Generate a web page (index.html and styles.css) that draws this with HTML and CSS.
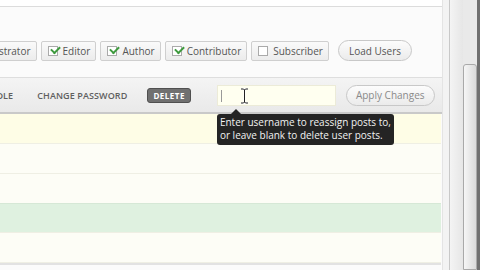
FILE: index.html
```html
<!DOCTYPE html>
<html lang="en">
<head>
  <meta charset="UTF-8">
  <title>Users</title>
  <link rel="stylesheet" href="styles.css">
</head>
<body>
  <div class="page">
    <div class="main">
      <div class="topbox"></div>

      <div class="roles">
        <label class="role"><span class="box"></span>Administrator</label>
        <label class="role"><span class="box on"></span>Editor</label>
        <label class="role"><span class="box on"></span>Author</label>
        <label class="role"><span class="box on"></span>Contributor</label>
        <label class="role"><span class="box"></span>Subscriber</label>
        <button class="pill load">Load Users</button>
      </div>

      <div class="toolbar">
        <span class="action first">CHANGE ROLE</span>
        <span class="action">CHANGE PASSWORD</span>
        <span class="badge">DELETE</span>
        <div class="reassign">
          <div class="field">
            <span class="caret"></span>
            <svg class="ibeam" width="9" height="16" viewBox="0 0 9 16">
              <path d="M1 1h2.5l1 1 1-1H8M4.5 2v12M1 15h2.5l1-1 1 1H8" fill="none" stroke="#fff" stroke-width="2.2"/>
              <path d="M1 1h2.5l1 1 1-1H8M4.5 2v12M1 15h2.5l1-1 1 1H8" fill="none" stroke="#222" stroke-width="1"/>
            </svg>
          </div>
          <div class="tip">Enter username to reassign posts to,<br>or leave blank to delete user posts.</div>
        </div>
        <button class="pill apply">Apply Changes</button>
      </div>

      <div class="rows">
        <div class="row sel"></div>
        <div class="row"></div>
        <div class="row"></div>
        <div class="row green"></div>
        <div class="row"></div>
      </div>
    </div>

    <div class="gutter"></div>
    <div class="scrollbar">
      <div class="track"></div>
      <div class="thumb-col"><div class="thumb"></div></div>
      <div class="edge"></div>
    </div>
  </div>
</body>
</html>
```

FILE: styles.css
```css
* {
  box-sizing: border-box;
}
body {
  margin: 0;
  font-family: "Open Sans", "Liberation Sans", sans-serif;
  background-color: #f2f2f2;
  overflow: hidden;
}
.page {
  display: flex;
  height: 270px;
}
.main {
  width: 443px;
  display: flex;
  flex-direction: column;
  background-color: #fbfbfb;
  overflow: hidden;
  border-right: 1px solid #e4e4e4;
}
.topbox {
  height: 7px;
  background-color: #fff;
  border-bottom: 1px solid #dcdcdc;
}
.roles {
  display: flex;
  align-items: center;
  gap: 4px;
  margin-top: 33px;
  margin-left: -56px;
  height: 21px;
}
.role {
  display: flex;
  align-items: center;
  gap: 5px;
  height: 20px;
  padding: 0 5px 0 6px;
  font-size: 10px;
  color: #555;
  white-space: nowrap;
  background: linear-gradient(#fafafa, #ececec);
  border: 1px solid #cfcfcf;
  border-radius: 2px;
}
.box {
  position: relative;
  width: 10px;
  height: 10px;
  border: 1px solid #aaa;
  background-color: #fff;
}
.box.on::after {
  content: "";
  position: absolute;
  left: 2px;
  top: -1px;
  width: 7px;
  height: 4px;
  border-left: 2px solid #3d9a3d;
  border-bottom: 2px solid #3d9a3d;
  transform: rotate(-45deg);
}
.pill {
  font-family: inherit;
  font-size: 10px;
  color: #666;
  background: linear-gradient(#fcfcfc, #ebebeb);
  border: 1px solid #c8c8c8;
  border-radius: 11px;
  white-space: nowrap;
  padding: 0 10px;
  height: 21px;
}
.load {
  margin-left: 5px;
  color: #555;
}
.toolbar {
  display: flex;
  align-items: center;
  height: 37px;
  margin-top: 16px;
  margin-left: -50px;
  background: linear-gradient(#f4f4f4, #e9e9e9);
  border-top: 1px solid #dedede;
  border-bottom: 2px solid #c9c9c9;
}
.action {
  font-size: 9px;
  font-weight: 600;
  color: #5f5f5f;
  letter-spacing: 0.1px;
  white-space: nowrap;
  margin-right: 24px;
}
.badge {
  font-size: 8px;
  font-weight: 700;
  color: #fff;
  letter-spacing: 0.5px;
  background-color: #707070;
  border: 1px solid #505050;
  border-radius: 3px;
  padding: 1px 5px;
  margin-left: -4px;
}
.reassign {
  position: relative;
  margin-left: 26px;
}
.field {
  position: relative;
  width: 119px;
  height: 21px;
  background-color: #fffff0;
  border: 1px solid #ecebd8;
}
.caret {
  position: absolute;
  left: 3px;
  top: 4px;
  width: 1px;
  height: 12px;
  background-color: #999;
}
.ibeam {
  position: absolute;
  left: 22px;
  top: 2px;
}
.tip {
  position: absolute;
  left: 0;
  top: 29px;
  width: 177px;
  padding: 2px 3px 3px;
  font-size: 10px;
  line-height: 13px;
  color: #f2f2f2;
  white-space: nowrap;
  background-color: #242424;
  border-radius: 3px;
  z-index: 2;
}
.tip::before {
  content: "";
  position: absolute;
  left: 14px;
  top: -5px;
  border-left: 5px solid transparent;
  border-right: 5px solid transparent;
  border-bottom: 5px solid #242424;
}
.apply {
  margin-left: 10px;
  padding: 0 9px;
  color: #8a8a8a;
}
.rows {
  display: flex;
  flex-direction: column;
  margin-right: 1px;
  border-bottom: 2px solid #e2e2e2;
}
.row {
  height: 30px;
  background-color: #fdfdf6;
  border-bottom: 1px solid #efefe4;
}
.row.sel {
  background-color: #fefde6;
}
.row.green {
  background-color: #dff1e0;
  border-top: 1px solid #d6e8d6;
  margin-top: -1px;
}
.gutter {
  width: 6px;
  background-color: #f3f3f3;
}
.scrollbar {
  flex: 1;
  display: flex;
  border-left: 1px solid #c8c8c8;
}
.track {
  width: 13px;
  background: linear-gradient(90deg, #f4f4f4, #e6e6e6);
}
.thumb-col {
  width: 14px;
  background-color: #e9e9e9;
  padding-top: 64px;
}
.thumb {
  height: 100%;
  border: 1px solid #a9a9a9;
  border-radius: 3px 3px 0 0;
  background: linear-gradient(90deg, #f6f6f6, #dadada);
}
.edge {
  flex: 1;
  background-color: #707070;
}
```
